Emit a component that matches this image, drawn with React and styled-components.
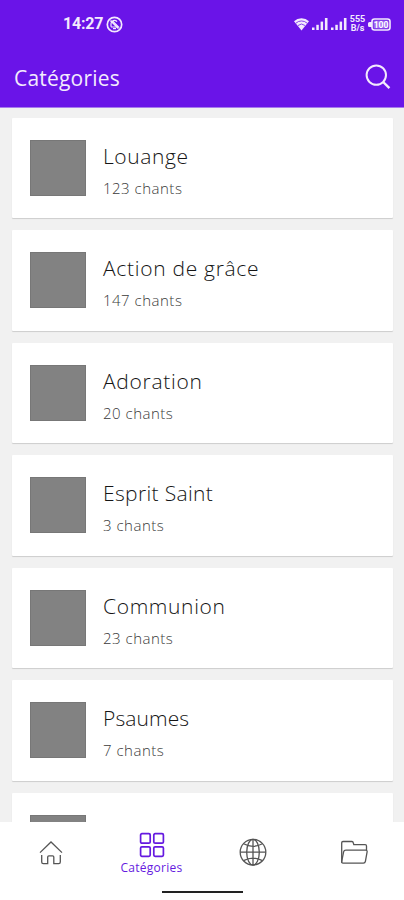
import React from 'react';
import styled, { createGlobalStyle } from 'styled-components';

const GlobalStyle = createGlobalStyle`
  * {
    box-sizing: border-box;
  }
  body {
    margin: 0;
    background: #f1f1f1;
    font-family: 'Open Sans', 'Noto Sans', sans-serif;
  }
`;

const Screen = styled.div`
  display: flex;
  flex-direction: column;
  width: 404px;
  height: 900px;
  overflow: hidden;
  background: #f1f1f1;
`;

const Header = styled.header`
  flex: none;
  height: 108px;
  background: #6a14e8;
  border-bottom: 1px solid #a77bec;
  color: #f3eafd;
`;

const StatusBar = styled.div`
  display: flex;
  align-items: center;
  justify-content: space-between;
  height: 46px;
  padding: 2px 13px 0 63px;
`;

const Clock = styled.div`
  display: flex;
  align-items: center;
  gap: 3px;
  font: 700 16px/20px Roboto, sans-serif;
  letter-spacing: -0.2px;
`;

const StatusIcons = styled.div`
  display: flex;
  align-items: center;
  gap: 3px;
`;

const Speed = styled.div`
  display: flex;
  flex-direction: column;
  align-items: center;
  width: 15px;
  font: 700 9px/9px Roboto, sans-serif;
`;

const TitleBar = styled.div`
  display: flex;
  align-items: center;
  justify-content: space-between;
  height: 62px;
  padding: 0 13px 0 14px;
`;

const PageTitle = styled.h1`
  margin: 2px 0 0;
  font-size: 21px;
  font-weight: 400;
  line-height: 30px;
  letter-spacing: 0.2px;
`;

const List = styled.main`
  flex: 1;
  display: flex;
  flex-direction: column;
  gap: 12px;
  min-height: 0;
  padding: 9.8px 11px 0 12px;
  overflow: hidden;
`;

const Card = styled.article`
  flex: none;
  display: flex;
  gap: 17px;
  height: 100.5px;
  padding: 22px 18px;
  border-radius: 1px;
  background: #fff;
  box-shadow: 0 1px 1px rgba(0, 0, 0, 0.15);
`;

const Thumb = styled.div`
  width: 56px;
  height: 56px;
  background: #828282;
  border: 1px solid #777;
`;

const Name = styled.h2`
  margin: 1px 0 0;
  color: #151515;
  font-size: 21px;
  font-weight: 300;
  line-height: 30px;
  letter-spacing: ${({ $spacing }) => $spacing}px;
`;

const Count = styled.p`
  margin: 7px 0 0;
  color: #3a3a3a;
  font-size: 15px;
  font-weight: 300;
  line-height: 20px;
  letter-spacing: 0.5px;
`;

const Nav = styled.nav`
  flex: none;
  height: 78px;
  background: #fff;
`;

const Tabs = styled.div`
  display: grid;
  grid-template-columns: repeat(4, 1fr);
  height: 69px;
`;

const Tab = styled.div`
  display: flex;
  flex-direction: column;
  align-items: center;
  padding-top: ${({ $active }) => ($active ? 10 : 16)}px;
  color: ${({ $active }) => ($active ? '#6519e0' : '#555')};
  font-size: 12px;
  line-height: 19px;
  letter-spacing: 0.25px;
`;

const HomeBar = styled.div`
  width: 81px;
  height: 2px;
  margin: 0 auto;
  background: #222;
`;

function MuteIcon() {
  return (
    <svg width='17' height='17' viewBox='0 0 17 17' fill='none' stroke='currentColor'>
      <circle cx='8.5' cy='8.5' r='7.2' strokeWidth='1.7' />
      <path d='M5 10.8V7.8a3.4 3.4 0 0 1 6-2.2M7 5.5l5.5 5.5H5' strokeWidth='1.2' />
      <path d='M4.5 4.5l8 8' strokeWidth='1.7' />
      <path d='M7 12.6h3' strokeWidth='1.2' />
    </svg>
  );
}

function WifiIcon() {
  return (
    <svg width='15' height='14' viewBox='0 0 15 14'>
      <path d='M0 4.3a11 11 0 0 1 15 0L7.5 13.5z' fill='currentColor' />
      <path
        d='M2 6.1a8.2 8.2 0 0 1 11 0M4 8.5a5.4 5.4 0 0 1 7 0'
        fill='none'
        stroke='#6a14e8'
        strokeWidth='.8'
      />
    </svg>
  );
}

function SignalIcon() {
  return (
    <svg width='16' height='13' viewBox='0 0 16 13' fill='currentColor'>
      <rect x='0' y='9.5' width='2.5' height='2.5' />
      <rect x='4.3' y='6.8' width='2.5' height='5.2' />
      <rect x='8.6' y='3.6' width='2.5' height='8.4' />
      <rect x='12.9' y='0' width='2.6' height='12' />
    </svg>
  );
}

function BatteryIcon() {
  return (
    <svg width='23' height='13' viewBox='0 0 23 13'>
      <path d='M4 4H1.5A1.5 1.5 0 0 0 0 5.5v2A1.5 1.5 0 0 0 1.5 9H4z' fill='currentColor' />
      <rect x='4' y='1' width='18' height='11' rx='2.5' fill='none' stroke='currentColor' strokeWidth='1.6' />
      <rect x='5.5' y='2.5' width='15' height='8' rx='1' fill='currentColor' opacity='.4' />
      <text
        x='13'
        y='9.6'
        textAnchor='middle'
        fill='#fff'
        fontFamily='Roboto, sans-serif'
        fontSize='8.5'
        fontWeight='700'
      >
        100
      </text>
    </svg>
  );
}

function SearchIcon() {
  return (
    <svg width='26' height='26' viewBox='0 0 26 26' fill='none' stroke='currentColor' strokeWidth='2'>
      <circle cx='11.3' cy='11.1' r='9.7' />
      <path d='M18.2 18l6.2 6.2' strokeWidth='2.4' />
    </svg>
  );
}

function HomeIcon() {
  return (
    <svg width='24' height='28' viewBox='0 0 24 28' fill='none' stroke='currentColor' strokeWidth='1.3'>
      <path d='M1 14.6L12 4 23 14.6' />
      <path d='M2.7 17v7q0 1.6 1.6 1.6h4.4v-6.6q0-1.2 1.2-1.2h3.7q1.2 0 1.2 1.2v6.6h4.9q1.6 0 1.6-1.6v-7' />
    </svg>
  );
}

function GridIcon() {
  return (
    <svg width='26' height='26' viewBox='0 0 26 26' fill='none' stroke='currentColor' strokeWidth='1.7'>
      <rect x='1.6' y='1.6' width='9.6' height='9.6' rx='1.3' />
      <rect x='14.8' y='1.6' width='9.6' height='9.6' rx='1.3' />
      <rect x='1.6' y='14.8' width='9.6' height='9.6' rx='1.3' />
      <rect x='14.8' y='14.8' width='9.6' height='9.6' rx='1.3' />
    </svg>
  );
}

function GlobeIcon() {
  return (
    <svg width='28' height='28' viewBox='0 0 28 28' fill='none' stroke='currentColor' strokeWidth='1.3'>
      <circle cx='14' cy='14.2' r='12.8' />
      <ellipse cx='14' cy='14.2' rx='6.3' ry='12.8' />
      <path d='M14 1.4V27M1.2 14.2h25.6M4.6 5.8q9.4 5 18.8 0M4.6 22.6q9.4-5 18.8 0' />
    </svg>
  );
}

function FolderIcon() {
  return (
    <svg width='28' height='28' viewBox='0 0 28 28' fill='none' stroke='currentColor' strokeWidth='1.3'>
      <path d='M1.7 24.5V4.8q0-1.3 1.3-1.3h9q1 0 1.2 1l.6 2.1h11.4q1.3 0 1.3 1.4v4' />
      <path d='M5.9 12.2h19.7q1.8 0 1.5 1.6l-1.7 9.6q-.3 1.7-2 1.7H3q-1.6 0-1.3-1.6l1.9-9.6q.4-1.7 2.3-1.7z' />
    </svg>
  );
}

const categories = [
  { name: 'Louange', count: 123, spacing: 0.6 },
  { name: 'Action de grâce', count: 147, spacing: 0.7 },
  { name: 'Adoration', count: 20, spacing: 0.7 },
  { name: 'Esprit Saint', count: 3, spacing: 0.35 },
  { name: 'Communion', count: 23, spacing: 0.65 },
  { name: 'Psaumes', count: 7, spacing: 0.1 }
];

function CategoryCard({ name, count, spacing }) {
  return (
    <Card>
      <Thumb />
      <div>
        <Name $spacing={spacing}>{name}</Name>
        <Count>{count} chants</Count>
      </div>
    </Card>
  );
}

export default function App() {
  return (
    <Screen>
      <GlobalStyle />
      <Header>
        <StatusBar>
          <Clock>
            14:27
            <MuteIcon />
          </Clock>
          <StatusIcons>
            <WifiIcon />
            <SignalIcon />
            <SignalIcon />
            <Speed>
              <span>555</span>
              <span>B/s</span>
            </Speed>
            <BatteryIcon />
          </StatusIcons>
        </StatusBar>
        <TitleBar>
          <PageTitle>Catégories</PageTitle>
          <SearchIcon />
        </TitleBar>
      </Header>
      <List>
        {categories.map((category) => (
          <CategoryCard key={category.name} {...category} />
        ))}
        <Card>
          <Thumb />
        </Card>
      </List>
      <Nav>
        <Tabs>
          <Tab>
            <HomeIcon />
          </Tab>
          <Tab $active>
            <GridIcon />
            Catégories
          </Tab>
          <Tab>
            <GlobeIcon />
          </Tab>
          <Tab>
            <FolderIcon />
          </Tab>
        </Tabs>
        <HomeBar />
      </Nav>
    </Screen>
  );
}
